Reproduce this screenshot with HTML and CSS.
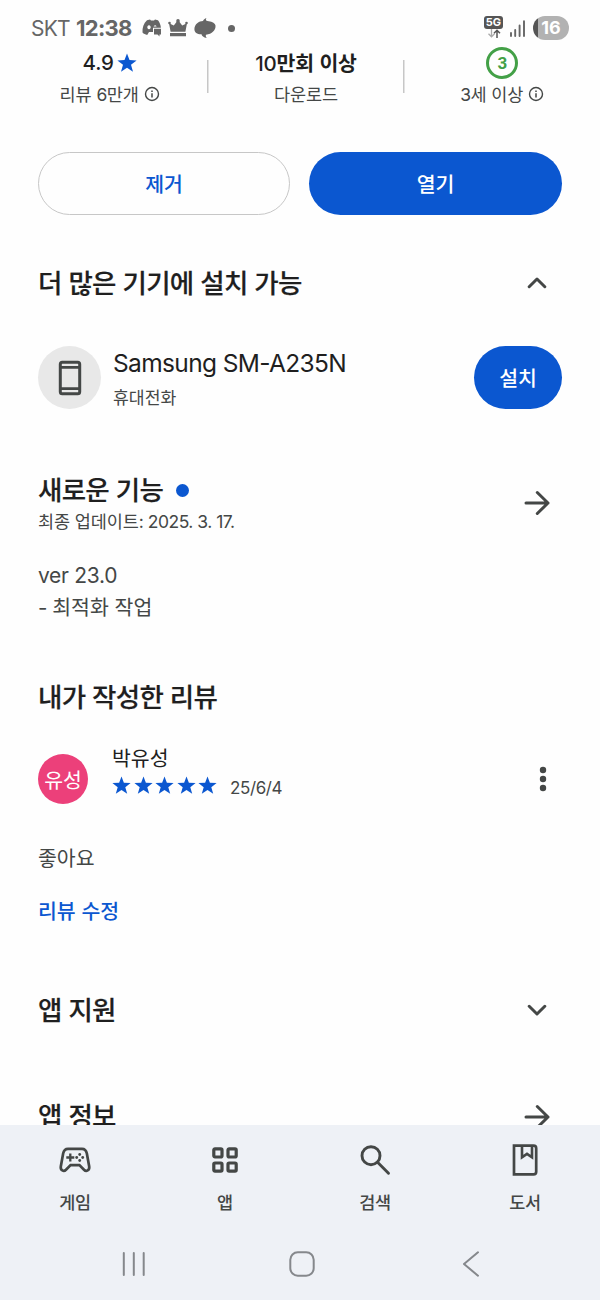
FILE: index.html
```
<!DOCTYPE html>
<html lang="ko">
<head>
<meta charset="utf-8">
<title>앱 상세정보</title>
<link rel="stylesheet" href="styles.css">
</head>
<body>
<svg width="0" height="0" class="defs">
  <symbol id="star" viewBox="0 0 20 20"><path d="M10 .6l2.500 6.500 7.100.300-5.600 4.400 2 6.900L10 14.800l-6 3.900 2-6.900L.4 7.400l7.100-.3z"/></symbol>
  <symbol id="info" viewBox="0 0 16 16"><circle cx="8" cy="8" r="6.500" fill="none" stroke="currentColor" stroke-width="1.400"/><path d="M8 7.200v4.200M8 4.500v1.500" stroke="currentColor" stroke-width="1.500"/></symbol>
  <symbol id="arrow" viewBox="0 0 26 26"><path d="M2 13h22M13.300 2.500L24 13 13.300 23.500" fill="none" stroke="currentColor" stroke-width="3" stroke-linecap="round" stroke-linejoin="round"/></symbol>
</svg>
<main class="screen">
  <header class="status">
    <span class="carrier">SKT</span>
    <span class="clock">12:38</span>
    <svg class="s-chat" width="20" height="18" viewBox="0 0 20 18"><path fill="#666" fill-rule="evenodd" d="M5 1.200l3-.8 1 1.100h3L13 .4l3 .9c1.800 2.500 2.700 4.800 2.900 7.500H11v4.100H7l-1.800 3C3.400 15.500 1.700 14.700.5 13.400.2 8.700 1.600 4.400 5 1.200zM7 6.300a1.700 2 0 1 0 .01 0zM13 6.300a1.700 2 0 0 0-1.400 1.300h3A1.700 2 0 0 0 13 6.300z"/><path fill="#666" d="M12 9.800h7v5.700h-1.500v2l-2-2H12z"/></svg>
    <svg class="s-crown" width="20" height="18" viewBox="0 0 20 18"><path fill="#666" d="M1 4.200l4.800 2.300L10 1l4.200 5.500L19 4.200l-1.600 8.600H2.600zM2 14h16v3.200H2z"/><circle cx="1.500" cy="4" r="1.300" fill="#666"/><circle cx="10" cy="1.900" r="1.800" fill="#666"/><circle cx="18.500" cy="4" r="1.300" fill="#666"/></svg>
    <svg class="s-leaf" width="22" height="20" viewBox="0 0 22 20"><path fill="#666" d="M12.500 0C11.300 1.500 12 2.700 13.500 3.100 17 3.800 20.500 4.200 21.500 7.500 22 12 18 16 12 16.800c-.5 1.200-.1 2.200.8 3.200C9.500 19.500 7.800 18 7.500 16.300 3.500 16.500.3 14.600.4 11 .5 6 5 3 9 2.900 9.500 1.700 10.800.6 12.500 0z"/></svg>
    <span class="dot-more"></span>
    <span class="grow"></span>
    <span class="net"><b>5G</b><svg width="16" height="9" viewBox="0 0 16 9"><path d="M5.500 0v7.500M2.500 4.800l3 3 3-3" fill="none" stroke="#aaa" stroke-width="1.300"/><path d="M11 9V1.500M8 4.200l3-3 3 3" fill="none" stroke="#555" stroke-width="1.500"/></svg></span>
    <svg class="signal" width="17" height="17" viewBox="0 0 17 17"><path d="M2 13v3M6.200 10v6M10.600 5.500V16M15 1.300V16" stroke="#666" stroke-width="1.900" stroke-linecap="round"/></svg>
    <span class="battery">16</span>
  </header>

  <section class="stats">
    <div class="stat">
      <div class="value"><span class="num">4.9</span><svg class="rate" width="20" height="20"><use href="#star"/></svg></div>
      <div class="label"><span>리뷰 <span class="la">6</span>만개</span><svg width="16" height="16"><use href="#info"/></svg></div>
    </div>
    <div class="stat stat-mid">
      <div class="value"><span class="count"><span class="ten">10</span>만회 이상</span></div>
      <div class="label">다운로드</div>
    </div>
    <div class="stat">
      <div class="value"><span class="age">3</span></div>
      <div class="label"><span><span class="la">3</span>세 이상</span><svg width="16" height="16"><use href="#info"/></svg></div>
    </div>
  </section>

  <div class="actions"><button class="btn outline">제거</button><button class="btn filled">열기</button></div>

  <section class="row devices"><h2>더 많은 기기에 설치 가능</h2><svg class="chev" width="20" height="12" viewBox="0 0 20 12"><path d="M2.200 9.700L10 2l7.800 7.700"/></svg></section>
  <section class="device">
    <div class="device-icon"><svg width="24" height="36" viewBox="0 0 24 36"><rect x="2.300" y="2.300" width="19.400" height="31.400" rx="2" fill="none" stroke="#444746" stroke-width="3"/><path d="M2 7.300h20M2 28.700h20" stroke="#444746" stroke-width="2.800"/></svg></div>
    <div class="device-text"><div class="device-name">Samsung SM-A235N</div><div class="device-kind">휴대전화</div></div>
    <button class="btn filled install">설치</button>
  </section>

  <section class="row news">
    <div><h2>새로운 기능<i class="badge"></i></h2><p class="updated">최종 업데이트<span class="la">: 2025. 3. 17.</span></p></div>
    <svg class="arrow" width="26" height="26"><use href="#arrow"/></svg>
  </section>
  <div class="notes"><div class="ver">ver 23.0</div><div class="note"><span class="la">- </span>최적화 작업</div></div>

  <section class="row mine"><h2>내가 작성한 리뷰</h2></section>
  <section class="review">
    <div class="avatar">유성</div>
    <div class="review-text">
      <div class="name">박유성</div>
      <div class="rating"><span class="stars"><svg width="19" height="19"><use href="#star"/></svg><svg width="19" height="19"><use href="#star"/></svg><svg width="19" height="19"><use href="#star"/></svg><svg width="19" height="19"><use href="#star"/></svg><svg width="19" height="19"><use href="#star"/></svg></span><span class="date">25/6/4</span></div>
    </div>
    <svg width="8" height="26" viewBox="0 0 8 26" class="kebab"><circle cx="4" cy="4" r="3.200"/><circle cx="4" cy="13" r="3.200"/><circle cx="4" cy="22" r="3.200"/></svg>
  </section>
  <p class="comment">좋아요</p>
  <a class="edit">리뷰 수정</a>

  <section class="row support"><h2>앱 지원</h2><svg class="chev" width="20" height="12" viewBox="0 0 20 12"><path d="M2.200 2.300L10 10l7.800-7.700"/></svg></section>
  <section class="row about"><h2>앱 정보</h2><svg class="arrow" width="26" height="26"><use href="#arrow"/></svg></section>
</main>

<footer class="bottom">
  <nav class="tabs">
    <a class="tab"><span class="tab-icon"><svg width="34" height="28" viewBox="0 0 34 28"><path d="M10 2.800h14c3 0 4.200 1.600 4.800 4.500l2.400 13.200c.6 4-3 5.400-5.200 3.200l-4.600-4.600H12.600L8 23.700c-2.200 2.200-5.800.8-5.200-3.200L5.200 7.300C5.800 4.400 7 2.800 10 2.800z" fill="none" stroke="#444746" stroke-width="2.700"/><path d="M12.300 7.500v8M8.300 11.500h8" stroke="#444746" stroke-width="2.300"/><g fill="#444746"><circle cx="21.700" cy="8.500" r="1.400"/><circle cx="21.700" cy="14.500" r="1.400"/><circle cx="18.700" cy="11.500" r="1.400"/><circle cx="24.700" cy="11.500" r="1.400"/></g></svg></span><span>게임</span></a>
    <a class="tab"><span class="tab-icon"><svg width="28" height="28" viewBox="0 0 28 28"><g fill="none" stroke="#444746" stroke-width="3.200"><rect x="2.800" y="2.800" width="8.200" height="8.200" rx="1.200"/><rect x="17" y="2.800" width="8.200" height="8.200" rx="1.200"/><rect x="2.800" y="17" width="8.200" height="8.200" rx="1.200"/><rect x="17" y="17" width="8.200" height="8.200" rx="1.200"/></g></svg></span><span>앱</span></a>
    <a class="tab"><span class="tab-icon"><svg width="32" height="32" viewBox="0 0 32 32"><g fill="none" stroke="#444746" stroke-width="2.900" stroke-linecap="round"><circle cx="12" cy="11.700" r="9"/><path d="M18.800 18.500L29.500 29.200"/></g></svg></span><span>검색</span></a>
    <a class="tab"><span class="tab-icon"><svg width="28" height="34" viewBox="0 0 28 34"><path d="M3 2.700h19.500c1.500 0 2.700 1.200 2.700 2.700v23.300c0 1.500-1.200 2.700-2.700 2.700H3z" fill="none" stroke="#444746" stroke-width="2.700"/><path d="M11 3v11.200l5-3.400 5 3.400V3" fill="none" stroke="#444746" stroke-width="2.600"/></svg></span><span>도서</span></a>
  </nav>
  <div class="sysnav">
    <svg width="26" height="26" viewBox="0 0 26 26"><path d="M2.800 2v22M12.800 2v22M22.700 2v22"/></svg>
    <svg class="home" width="28" height="28" viewBox="0 0 28 28"><rect x="2.300" y="2.300" width="23.400" height="23.400" rx="7.500"/></svg>
    <svg width="20" height="28" viewBox="0 0 20 28"><path d="M17 2.300L3 14l14 11.700"/></svg>
  </div>
</footer>
</body>
</html>
```
FILE: styles.css
```
* { box-sizing: border-box; }
body {
  margin: 0;
  width: 600px;
  height: 1300px;
  overflow: hidden;
  background: #fefefe;
  color: #1f1f1f;
  font-family: "Noto Sans CJK KR", sans-serif;
}
h2, p { margin: 0; }
svg { display: block; flex: none; }
.defs { position: absolute; }
.la { font-family: Inter, sans-serif; letter-spacing: -0.5px; }
.screen { height: 1125px; overflow: hidden; }

.status {
  display: flex;
  align-items: center;
  height: 48px;
  padding: 8px 31px 0;
  color: #666;
  font-family: Inter, sans-serif;
  white-space: nowrap;
}
.carrier { width: 45px; font-size: 21px; letter-spacing: -0.8px; }
.clock { width: 57px; font-size: 22px; font-weight: 700; letter-spacing: -0.7px; }
.s-chat { margin-left: 9px; }
.s-crown { margin-left: 6px; }
.s-leaf { margin-left: 6px; }
.dot-more { width: 7px; height: 7px; margin-left: 12px; border-radius: 50%; background: #666; }
.grow { flex: 1; }
.net { width: 19px; display: flex; flex-direction: column; align-items: center; margin-top: -3px; }
.net b {
  width: 19px;
  height: 13px;
  border-radius: 3px;
  background: #555;
  color: #fff;
  font-size: 11px;
  line-height: 13px;
  text-align: center;
}
.signal { margin-left: 6px; }
.battery {
  width: 36px;
  height: 24px;
  margin-left: 7px;
  border-radius: 12px;
  background: linear-gradient(90deg, #555 0 5px, #b2b2b2 5px);
  color: #fff;
  font-size: 18px;
  font-weight: 700;
  line-height: 24px;
  text-align: center;
}

.stats { display: flex; height: 62px; padding: 0 0 0 12px; }
.stat { width: 196px; }
.stat-mid {
  background: linear-gradient(#c7c7c7, #c7c7c7) 0 12px / 1.5px 33px no-repeat,
              linear-gradient(#c7c7c7, #c7c7c7) 100% 12px / 1.5px 33px no-repeat;
  width: 198px;
}
.value, .label { display: flex; align-items: center; justify-content: center; white-space: nowrap; }
.value { height: 30px; font-size: 20.5px; font-weight: 700; letter-spacing: -0.2px; }
.num { margin-top: -2px; font-family: Inter, sans-serif; font-size: 20.5px; font-weight: 500; }
.rate { margin-left: 3px; fill: #0b57d0; }
.count { margin-top: -3px; }
.ten { font-family: Inter, sans-serif; font-weight: 500; }
.label { height: 30px; gap: 5px; color: #444746; font-size: 17.5px; letter-spacing: -0.1px; }
.label svg { margin-top: 2px; }
.age {
  width: 32px;
  height: 32px;
  border: 3px solid #43a047;
  border-radius: 50%;
  color: #43a047;
  font: 700 17px/26px Roboto, sans-serif;
  text-align: center;
}

.actions { display: flex; gap: 19px; height: 63px; margin: 42px 38px 0; }
.btn {
  width: 253px;
  padding: 0 0 2px;
  border: 0;
  border-radius: 32px;
  font: 500 20.5px "Noto Sans CJK KR", sans-serif;
}
.outline { width: 252px; border: 1.500px solid #c7c7c7; background: transparent; color: #0b57d0; }
.filled { background: #0b57d0; color: #fff; }

.row { display: flex; align-items: center; justify-content: space-between; height: 40px; padding: 0 50px 0 38px; }
h2 {
  margin-top: -2px;
  font-size: 26.500px;
  font-weight: 500;
  letter-spacing: -0.700px;
  line-height: 40px;
  white-space: nowrap;
  -webkit-text-stroke: 0.200px #1f1f1f;
}
.chev { margin-right: 3px; fill: none; stroke: #444746; stroke-width: 3; stroke-linecap: round; stroke-linejoin: round; }
.arrow { color: #444746; }
.devices { margin-top: 48px; }
.device { display: flex; align-items: center; height: 63px; margin: 43px 38px 0; }
.device-icon { display: flex; align-items: center; justify-content: center; width: 63px; height: 63px; border-radius: 50%; background: #e8e8e8; }
.device-text { flex: 1; padding: 2px 0 0 12px; white-space: nowrap; }
.device-name { font-family: Inter, sans-serif; font-size: 24.500px; letter-spacing: -0.640px; line-height: 36px; }
.device-kind { color: #444746; font-size: 17.200px; line-height: 32px; }
.install { flex: none; width: 88px; height: 63px; }

.news { height: 66px; margin-top: 61px; }
.badge { display: inline-block; width: 13px; height: 13px; margin-left: 13px; border-radius: 50%; background: #0b57d0; vertical-align: 3px; }
.updated { height: 26px; color: #444746; font-size: 17.500px; letter-spacing: -0.100px; line-height: 24px; white-space: nowrap; }
.notes { margin: 24px 38px 0; color: #444746; font-size: 20.500px; line-height: 31px; }
.ver { height: 31px; font-family: Inter, sans-serif; font-size: 21px; letter-spacing: -0.300px; }
.note { height: 31px; }

.mine { margin-top: 55px; }
.review { display: flex; align-items: center; height: 70px; margin: 27px 53px 0 38px; }
.avatar { width: 50px; height: 50px; border-radius: 50%; background: #ec407a; color: #fff; font-size: 20.500px; line-height: 50px; text-align: center; }
.review-text { flex: 1; align-self: flex-start; padding-left: 24px; }
.name { height: 27px; font-size: 20.500px; line-height: 26px; }
.rating { display: flex; align-items: center; height: 28px; }
.stars { display: flex; gap: 2.500px; fill: #0b57d0; }
.date { margin-left: 13px; padding-top: 5px; color: #444746; font: 17px Inter, sans-serif; letter-spacing: -0.400px; }
.kebab { fill: #444746; }
.comment { height: 28px; margin: 29px 38px 0; color: #444746; font-size: 20.500px; line-height: 28px; }
.edit { display: block; height: 28px; margin: 25px 38px 0; color: #0b57d0; font-size: 20.500px; font-weight: 500; line-height: 28px; }
.support, .about { margin-top: 66px; }
.about .arrow { margin-top: 2px; }

.bottom { height: 175px; background: #eef1f6; }
.tabs { display: flex; height: 103px; padding-top: 14px; }
.tab { flex: 1; display: flex; flex-direction: column; align-items: center; color: #444746; font-size: 17.500px; font-weight: 500; letter-spacing: -0.300px; line-height: 30px; }
.tab-icon { display: flex; align-items: center; justify-content: center; height: 41px; margin-bottom: 7px; }
.sysnav { display: flex; align-items: center; justify-content: space-between; height: 72px; padding: 0 119px 0 121px; fill: none; stroke: #85888c; stroke-width: 2; stroke-linecap: round; stroke-linejoin: round; }
.home { margin-right: 4px; }
```
